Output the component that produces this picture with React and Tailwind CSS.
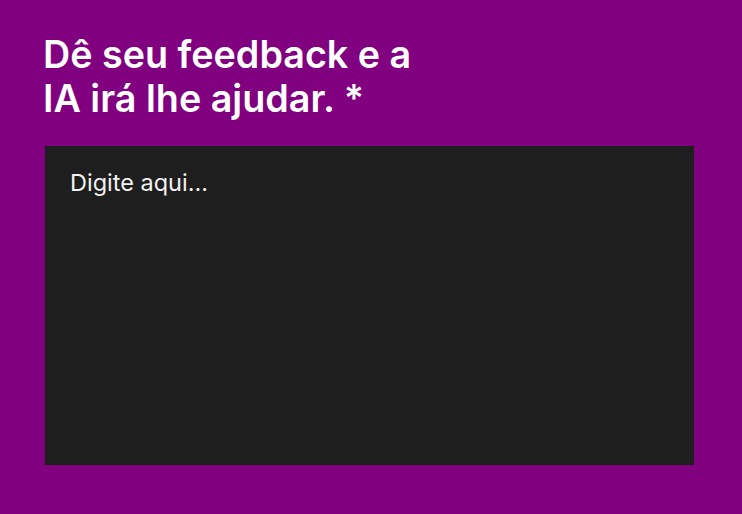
export default function App() {
  return (
    <div className="flex min-h-[514px] w-full flex-col items-start bg-[#800080] px-[45px] pt-[32px] font-['Inter',sans-serif]">
      <h1 className="ml-[-2px] text-[37.7px] font-semibold leading-[44px] text-white">
        Dê seu feedback e a<br />IA irá lhe ajudar. *
      </h1>
      <textarea
        placeholder="Digite aqui..."
        className="mt-[26px] block h-[319px] w-[649px] resize-none bg-[#1e1e1e] px-[25px] pt-[23px] font-['Inter',sans-serif] text-[23.5px] leading-[28px] text-white outline-none placeholder:text-[#f2f2f2]"
      />
    </div>
  );
}
